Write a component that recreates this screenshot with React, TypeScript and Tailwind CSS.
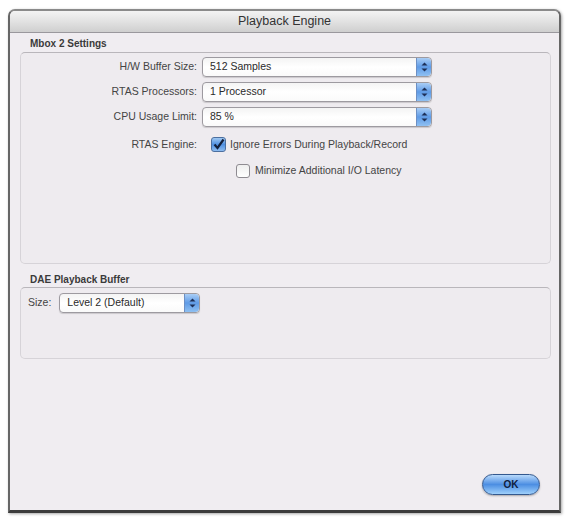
import React from "react";

const Stepper = () => (
  <div className="flex h-full w-[15px] flex-col items-center justify-center gap-[2px] rounded-r-[4px] border-l border-[#6c8fc4] bg-gradient-to-b from-[#a9cdf5] via-[#5f9be6] to-[#8fc0f2]">
    <svg width="7" height="4" viewBox="0 0 7 4">
      <path d="M0.5 3.5 L3.5 0.5 L6.5 3.5 Z" fill="#1d2f57" />
    </svg>
    <svg width="7" height="4" viewBox="0 0 7 4">
      <path d="M0.5 0.5 L3.5 3.5 L6.5 0.5 Z" fill="#1d2f57" />
    </svg>
  </div>
);

const Select = ({ value, width }: { value: string; width: string }) => (
  <div
    className={`flex h-[20px] ${width} items-center rounded-[4px] border border-[#9d9aa0] bg-gradient-to-b from-[#f4f4f4] via-white to-[#fafafa] shadow-[0_1px_1px_rgba(0,0,0,0.15)]`}
  >
    <span className="flex-1 truncate pl-[7px] text-[10.5px] text-[#2a2a2a]">{value}</span>
    <Stepper />
  </div>
);

const Checkbox = ({ checked }: { checked?: boolean }) =>
  checked ? (
    <div className="flex h-[15px] w-[15px] items-center justify-center rounded-[3px] border border-[#4c6f9f] bg-gradient-to-b from-[#9fc8f2] via-[#4f8fe0] to-[#8dbcf0]">
      <svg width="13" height="13" viewBox="0 0 13 13">
        <path d="M2.5 6.5 L5.5 10 L11.5 1.5" stroke="#13203c" strokeWidth="2.2" fill="none" />
      </svg>
    </div>
  ) : (
    <div className="h-[14px] w-[14px] rounded-[3px] border border-[#8e8b91] bg-gradient-to-b from-[#eeeeee] to-white" />
  );

const Row = ({ label, children }: { label: string; children: React.ReactNode }) => (
  <div className="flex items-center">
    <span className="w-[177px] pr-[1px] text-right text-[10.5px] text-[#444]">{label}</span>
    <div className="ml-[4px] flex items-center">{children}</div>
  </div>
);

export default function App() {
  return (
    <div
      className="h-[517px] w-[567px] bg-white pl-[8px] pt-[9px]"
      style={{ fontFamily: '"Liberation Sans", Arial, sans-serif' }}
    >
      <div className="flex h-[504px] w-[553px] flex-col overflow-hidden rounded-t-[7px] border-x-2 border-t-2 border-b-[3px] border-x-[#666] border-t-[#8a8a8a] border-b-[#3c3c3c] bg-[#f0edf1] shadow-[1px_1px_3px_rgba(0,0,0,0.35)]">
        {/* title bar */}
        <div className="flex h-[22px] items-center justify-center border-b border-[#9a989d] bg-gradient-to-b from-[#f3f3f3] via-[#e2e2e2] to-[#cfcfcf]">
          <span className="text-[12.5px] text-[#333]">Playback Engine</span>
        </div>

        <div className="flex flex-1 flex-col pt-[5px]">
          <span className="ml-[20px] text-[10px] font-bold leading-[12px] text-[#3a3a3a]">Mbox 2 Settings</span>

          {/* Mbox 2 group */}
          <div className="ml-[10px] mr-[8px] mt-[2px] flex h-[212px] flex-col rounded-[5px] border border-[#d6d3d8] border-t-[#b9b6bb] bg-[#eeebef] pt-[4px]">
            <div className="flex flex-col gap-[5px]">
              <Row label="H/W Buffer Size:">
                <Select value="512 Samples" width="w-[230px]" />
              </Row>
              <Row label="RTAS Processors:">
                <Select value="1 Processor" width="w-[230px]" />
              </Row>
              <Row label="CPU Usage Limit:">
                <Select value="85 %" width="w-[230px]" />
              </Row>
            </div>
            <div className="mt-[10px]">
              <Row label="RTAS Engine:">
                <div className="ml-[9px] flex items-center gap-[4px]">
                  <Checkbox checked />
                  <span className="text-[10.5px] text-[#444]">Ignore Errors During Playback/Record</span>
                </div>
              </Row>
            </div>
            <div className="ml-[215px] mt-[10px] flex items-center gap-[5px]">
              <Checkbox />
              <span className="text-[10.5px] text-[#444]">Minimize Additional I/O Latency</span>
            </div>
          </div>

          <span className="ml-[20px] mt-[10px] text-[10px] font-bold leading-[12px] text-[#3a3a3a]">DAE Playback Buffer</span>

          {/* DAE group */}
          <div className="ml-[10px] mr-[8px] mt-[1px] flex h-[72px] rounded-[5px] border border-[#d6d3d8] border-t-[#b9b6bb] bg-[#eeebef] pl-[7px] pt-[5px]">
            <div className="flex h-[20px] items-center gap-[8px]">
              <span className="text-[10.5px] text-[#444]">Size:</span>
              <Select value="Level 2 (Default)" width="w-[141px]" />
            </div>
          </div>

          <div className="flex-1" />

          <div className="mb-[15px] mr-[19px] flex justify-end">
            <button className="flex h-[21px] w-[58px] items-center justify-center rounded-full border border-[#34598f] bg-gradient-to-b from-[#b9dafb] via-[#4c8ee2] to-[#9fd0fb] shadow-[0_1px_2px_rgba(0,0,0,0.3)]">
              <span className="text-[10px] font-bold text-[#102040]">OK</span>
            </button>
          </div>
        </div>
      </div>
    </div>
  );
}
